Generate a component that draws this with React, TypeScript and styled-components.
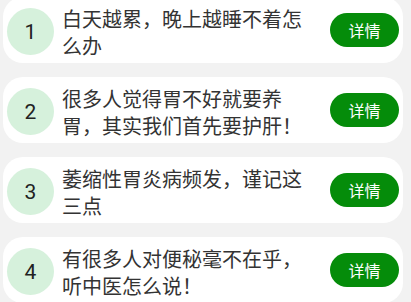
import React from "react";
import styled, { createGlobalStyle } from "styled-components";

const Global = createGlobalStyle`
  html, body {
    margin: 0;
    padding: 0;
    background: #f2f2f2;
    font-family: "Noto Sans CJK SC", "Noto Sans", sans-serif;
  }
  * { box-sizing: border-box; }
`;

const List = styled.div`
  display: flex;
  flex-direction: column;
  gap: 14px;
  padding: 0 8px 0 3px;
  margin-top: -3px;
`;

const Card = styled.div`
  display: flex;
  align-items: center;
  height: 66px;
  background: #ffffff;
  border-radius: 20px;
  padding: 3px 4px 0 4px;
`;

const Badge = styled.div`
  flex: none;
  width: 47px;
  height: 47px;
  border-radius: 50%;
  background: #d6f1dc;
  color: #222222;
  font-family: "Roboto", "Noto Sans", sans-serif;
  font-size: 21px;
  display: flex;
  align-items: center;
  justify-content: center;
`;

const Title = styled.div`
  flex: 1;
  margin: 0 20px 0 8px;
  font-size: 20px;
  line-height: 27px;
  color: #333333;
`;

const DetailButton = styled.button`
  flex: none;
  width: 69px;
  height: 34px;
  margin-top: -3px;
  border: none;
  border-radius: 17px;
  background: #058c0a;
  color: #ffffff;
  font-family: "Noto Sans CJK SC", sans-serif;
  font-size: 16px;
  padding: 0;
`;

const items = [
  "白天越累，晚上越睡不着怎么办",
  "很多人觉得胃不好就要养胃，其实我们首先要护肝！",
  "萎缩性胃炎病频发，谨记这三点",
  "有很多人对便秘毫不在乎，听中医怎么说！",
];

export default function App() {
  return (
    <>
      <Global />
      <List>
        {items.map((t, i) => (
          <Card key={i}>
            <Badge>{i + 1}</Badge>
            <Title>{t}</Title>
            <DetailButton>详情</DetailButton>
          </Card>
        ))}
      </List>
    </>
  );
}
